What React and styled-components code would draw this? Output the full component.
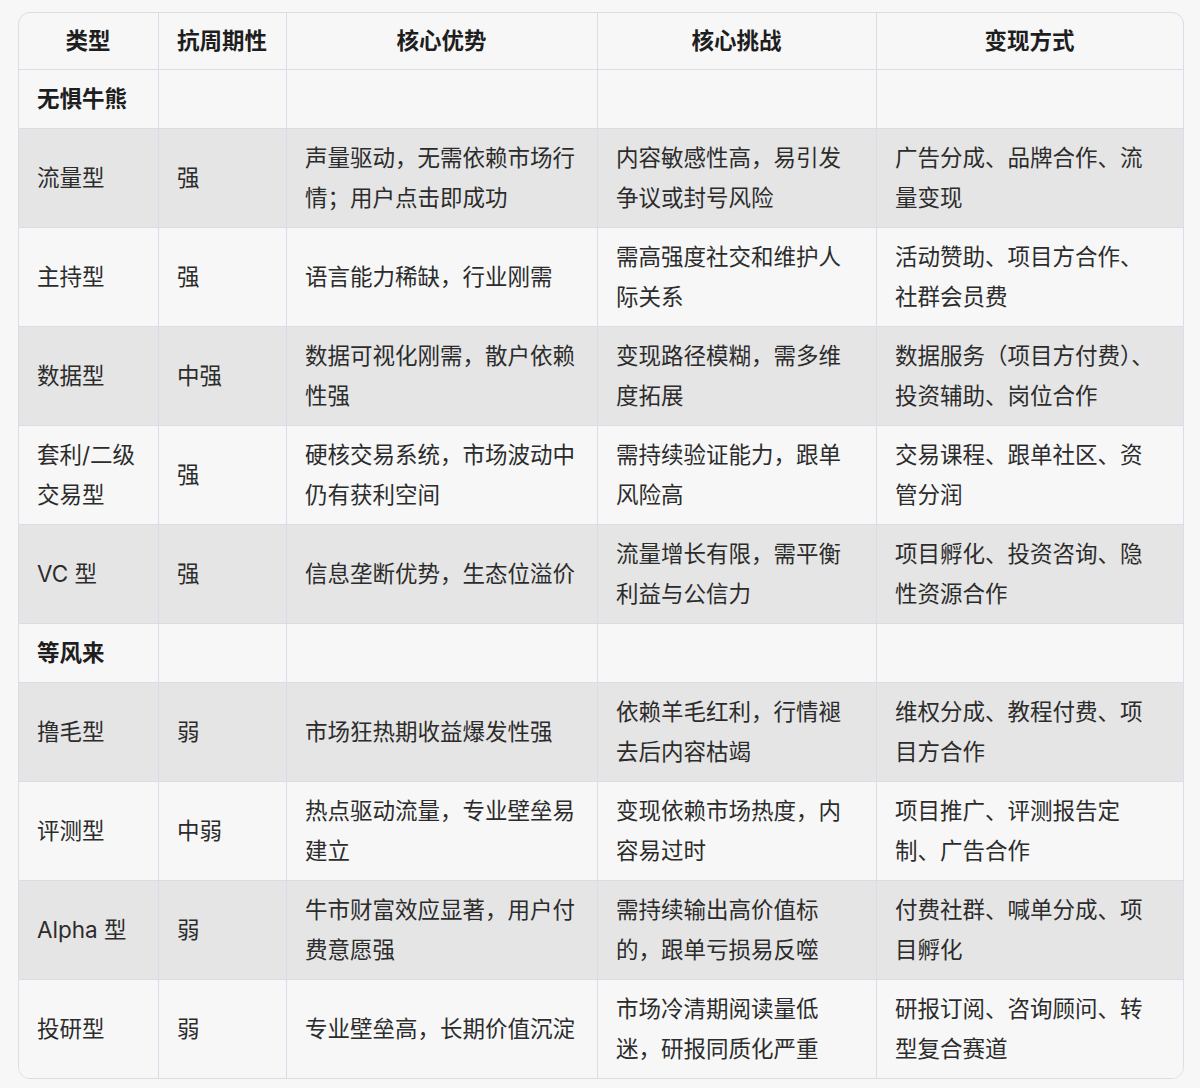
import styled, { createGlobalStyle } from "styled-components";

const GlobalStyle = createGlobalStyle`
  html, body {
    margin: 0;
    padding: 0;
    background: #f7f7f7;
  }
  body {
    font-family: "Inter", "Noto Sans CJK SC", sans-serif;
    color: #2a2a2a;
  }
`;

const Page = styled.div`
  padding: 12px 18px;
`;

const Table = styled.table`
  width: 1164px;
  table-layout: fixed;
  border-collapse: separate;
  border-spacing: 0;
  border: 1px solid #d8dde6;
  border-radius: 12px;
  overflow: hidden;
  font-size: 22.5px;
  line-height: 40px;
`;

const HeadCell = styled.th`
  padding: 8px 19px 8px 18px;
  font-weight: 600;
  text-align: center;
  white-space: nowrap;
  color: #1e1e1e;
  border-bottom: 1px solid #d8dde6;
  border-right: 1px solid #d8dde6;
  &:last-child {
    border-right: none;
  }
`;

const Row = styled.tr`
  background: ${(p) => (p.$striped ? "#e5e5e5" : "#f7f7f7")};
  &:last-child td {
    border-bottom: none;
  }
`;

const Cell = styled.td`
  padding: 9px 19px 9px 18px;
  vertical-align: middle;
  font-weight: ${(p) => (p.$bold ? 600 : 400)};
  color: ${(p) => (p.$bold ? "#1e1e1e" : "#2c2c2c")};
  border-bottom: 1px solid #d8dde6;
  border-right: 1px solid #d8dde6;
  &:last-child {
    border-right: none;
  }
`;

const widths = [140, 128, 311, 279, 306];
const headers = ["类型", "抗周期性", "核心优势", "核心挑战", "变现方式"];

const rows = [
  { section: "无惧牛熊" },
  ["流量型", "强", "声量驱动，无需依赖市场行情；用户点击即成功", "内容敏感性高，易引发争议或封号风险", "广告分成、品牌合作、流量变现"],
  ["主持型", "强", "语言能力稀缺，行业刚需", "需高强度社交和维护人际关系", "活动赞助、项目方合作、社群会员费"],
  ["数据型", "中强", "数据可视化刚需，散户依赖性强", "变现路径模糊，需多维度拓展", "数据服务（项目方付费）、投资辅助、岗位合作"],
  ["套利/二级交易型", "强", "硬核交易系统，市场波动中仍有获利空间", "需持续验证能力，跟单风险高", "交易课程、跟单社区、资管分润"],
  ["VC 型", "强", "信息垄断优势，生态位溢价", "流量增长有限，需平衡利益与公信力", "项目孵化、投资咨询、隐性资源合作"],
  { section: "等风来" },
  ["撸毛型", "弱", "市场狂热期收益爆发性强", "依赖羊毛红利，行情褪去后内容枯竭", "维权分成、教程付费、项目方合作"],
  ["评测型", "中弱", "热点驱动流量，专业壁垒易建立", "变现依赖市场热度，内容易过时", "项目推广、评测报告定制、广告合作"],
  ["Alpha 型", "弱", "牛市财富效应显著，用户付费意愿强", "需持续输出高价值标的，跟单亏损易反噬", "付费社群、喊单分成、项目孵化"],
  ["投研型", "弱", "专业壁垒高，长期价值沉淀", "市场冷清期阅读量低迷，研报同质化严重", "研报订阅、咨询顾问、转型复合赛道"],
];

export default function App() {
  return (
    <Page>
      <GlobalStyle />
      <Table>
        <colgroup>
          {widths.map((w, i) => (
            <col key={i} style={{ width: w }} />
          ))}
        </colgroup>
        <thead>
          <tr>
            {headers.map((h) => (
              <HeadCell key={h}>{h}</HeadCell>
            ))}
          </tr>
        </thead>
        <tbody>
          {rows.map((r, i) => (
            <Row key={i} $striped={i % 2 === 1}>
              {r.section ? (
                <>
                  <Cell $bold>{r.section}</Cell>
                  <Cell />
                  <Cell />
                  <Cell />
                  <Cell />
                </>
              ) : (
                r.map((c, j) => <Cell key={j}>{c}</Cell>)
              )}
            </Row>
          ))}
        </tbody>
      </Table>
    </Page>
  );
}
